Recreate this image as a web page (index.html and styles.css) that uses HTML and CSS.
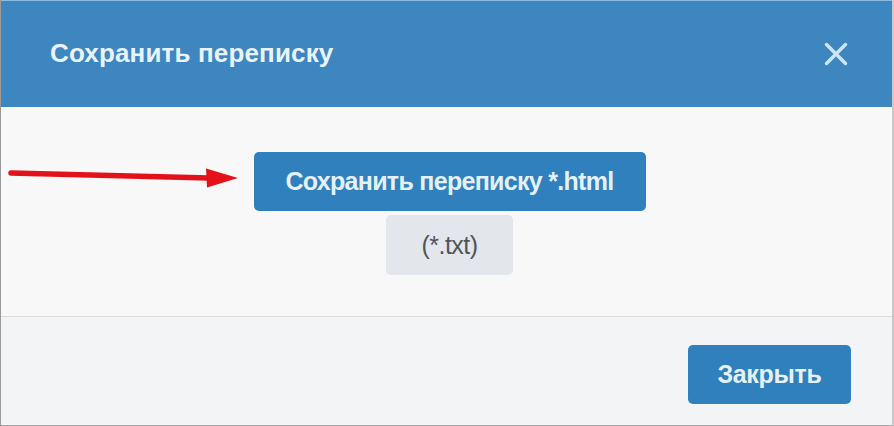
FILE: index.html
```html
<!DOCTYPE html>
<html lang="ru">
<head>
<meta charset="utf-8">
<title>Сохранить переписку</title>
<link rel="stylesheet" href="styles.css">
</head>
<body>
<div class="dialog">
  <div class="header">
    <div class="title">Сохранить переписку</div>
    <button class="close" aria-label="Закрыть">
      <svg width="24" height="24" viewBox="0 0 24 24"><path d="M2.5 2.5 L21.5 21.5 M21.5 2.5 L2.5 21.5" stroke="#cfe5f7" stroke-width="3.4" stroke-linecap="round" fill="none"/></svg>
    </button>
  </div>
  <div class="content">
    <button class="btn btn-primary btn-html">Сохранить переписку *.html</button>
    <button class="btn btn-light">(*.txt)</button>
    <svg class="arrow" width="240" height="30" viewBox="0 0 240 30"><path d="M10 5 L208 10" stroke="#e3121a" stroke-width="5.5" stroke-linecap="round" fill="none"/><path d="M205 0.5 L237 10 L206 19.5 Z" fill="#e3121a"/></svg>
  </div>
  <div class="footer">
    <button class="btn btn-primary btn-close">Закрыть</button>
  </div>
</div>
</body>
</html>
```
FILE: styles.css
```css
html, body {
  margin: 0;
  padding: 0;
  background: #ffffff;
}
.dialog {
  width: 894px;
  height: 426px;
  box-sizing: border-box;
  border-left: 1px solid #9a9a9a;
  border-right: 2px solid #c9c9c9;
  border-bottom: 1px solid #a8a8a8;
  display: flex;
  flex-direction: column;
  font-family: "Liberation Sans", Arial, sans-serif;
  position: relative;
}
.header {
  height: 107px;
  box-sizing: border-box;
  background: #3e86bf;
  border-top: 1px solid #8bbbe0;
  display: flex;
  align-items: center;
  justify-content: space-between;
  padding: 0 44px 0 49px;
}
.title {
  color: #e8f3fb;
  font-size: 26px;
  font-weight: bold;
  letter-spacing: 0.15px;
  margin-top: -2px;
}
.close {
  background: none;
  border: 0;
  padding: 0;
  width: 24px;
  height: 24px;
  display: flex;
}
.content {
  height: 210px;
  background: #f8f8f8;
  border-bottom: 1px solid #dcdcdc;
  display: flex;
  flex-direction: column;
  align-items: center;
  padding-top: 45px;
  padding-left: 6px;
  box-sizing: border-box;
  position: relative;
}
.btn {
  border: 0;
  font-family: "Liberation Sans", Arial, sans-serif;
  cursor: pointer;
  border-radius: 5px;
  padding: 0;
}
.btn-primary {
  background: #2f80bd;
  color: #e4f1fb;
  font-weight: bold;
}
.btn-html {
  width: 392px;
  height: 59px;
  font-size: 25px;
  letter-spacing: -0.7px;
}
.btn-light {
  margin-top: 4px;
  width: 127px;
  height: 60px;
  background: #e3e6ea;
  color: #50555b;
  font-size: 25px;
  letter-spacing: -0.5px;
}
.arrow {
  position: absolute;
  left: 0;
  top: 61px;
}
.footer {
  flex: 1;
  background: #f3f4f6;
  display: flex;
  justify-content: flex-end;
  align-items: flex-start;
  padding: 28px 41px 0 0;
}
.btn-close {
  width: 163px;
  height: 59px;
  font-size: 25px;
  letter-spacing: -0.3px;
}
```
